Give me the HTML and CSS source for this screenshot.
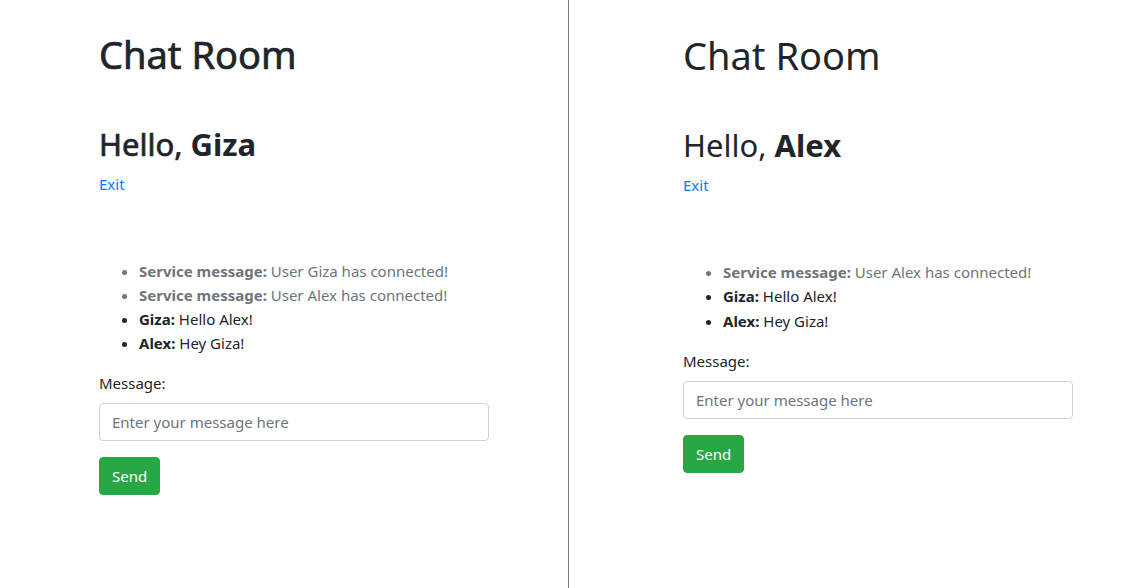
FILE: index.html
```html
<!DOCTYPE html>
<html lang="en">
<head>
<meta charset="utf-8">
<title>Chat Room</title>
<link rel="stylesheet" href="styles.css">
</head>
<body>
<div class="split">
  <section class="pane pane-left">
    <h1 class="title">Chat Room</h1>
    <h2 class="hello">Hello, <b>Giza</b></h2>
    <a class="exit" href="#">Exit</a>
    <ul class="messages">
      <li class="service"><b>Service message:</b> User Giza has connected!</li>
      <li class="service"><b>Service message:</b> User Alex has connected!</li>
      <li><b>Giza:</b> Hello Alex!</li>
      <li><b>Alex:</b> Hey Giza!</li>
    </ul>
    <label class="label">Message:</label>
    <div class="input">Enter your message here</div>
    <button class="send">Send</button>
  </section>
  <section class="pane pane-right">
    <h1 class="title">Chat Room</h1>
    <h2 class="hello">Hello, <b>Alex</b></h2>
    <a class="exit" href="#">Exit</a>
    <ul class="messages">
      <li class="service"><b>Service message:</b> User Alex has connected!</li>
      <li><b>Giza:</b> Hello Alex!</li>
      <li><b>Alex:</b> Hey Giza!</li>
    </ul>
    <label class="label">Message:</label>
    <div class="input">Enter your message here</div>
    <button class="send">Send</button>
  </section>
</div>
</body>
</html>
```
FILE: styles.css
```css
html, body {
  margin: 0;
  padding: 0;
  background: #fff;
}
body {
  font-family: "Noto Sans", "Open Sans", sans-serif;
  font-size: 15px;
  line-height: 24px;
  color: #212529;
}
.split {
  display: flex;
  height: 588px;
}
.pane {
  display: flex;
  flex-direction: column;
  align-items: flex-start;
}
.pane-left {
  width: 569px;
  border-right: 1px solid #7a7a7a;
  padding-left: 99px;
  box-sizing: border-box;
}
.pane-right {
  flex: 1;
  padding-left: 114px;
  padding-top: 1px;
}
.title {
  margin: 30px 0 0;
  font-size: 38px;
  line-height: 48px;
  font-weight: 400;
}
.hello {
  margin: 47px 0 9px;
  font-size: 31px;
  line-height: 38px;
  font-weight: 400;
}
.hello b { font-weight: 700; -webkit-text-stroke: 0; }
.pane-left .title,
.pane-left .hello {
  -webkit-text-stroke: 0.7px #212529;
}
.pane-left .hello b { -webkit-text-stroke: 0; }
.exit {
  color: #007bff;
  text-decoration: none;
  line-height: 24px;
}
.messages {
  margin: 63px 0 0;
  padding-left: 40px;
}
.messages li { line-height: 24px; }
.pane-right .messages li { line-height: 24.4px; }
.messages b { font-weight: 700; }
.service { color: #6c757d; }
.label {
  margin-top: 16px;
  line-height: 24px;
}
.input {
  margin-top: 8px;
  width: 390px;
  height: 38px;
  box-sizing: border-box;
  border: 1px solid #ced4da;
  border-radius: 4px;
  padding: 6px 12px;
  color: #6c757d;
  line-height: 24px;
}
.send {
  margin-top: 16px;
  height: 38px;
  padding: 6px 12px;
  border: 1px solid #28a745;
  background: #28a745;
  color: #fff;
  border-radius: 4px;
  font-family: inherit;
  font-size: 15px;
  line-height: 24px;
}
```
